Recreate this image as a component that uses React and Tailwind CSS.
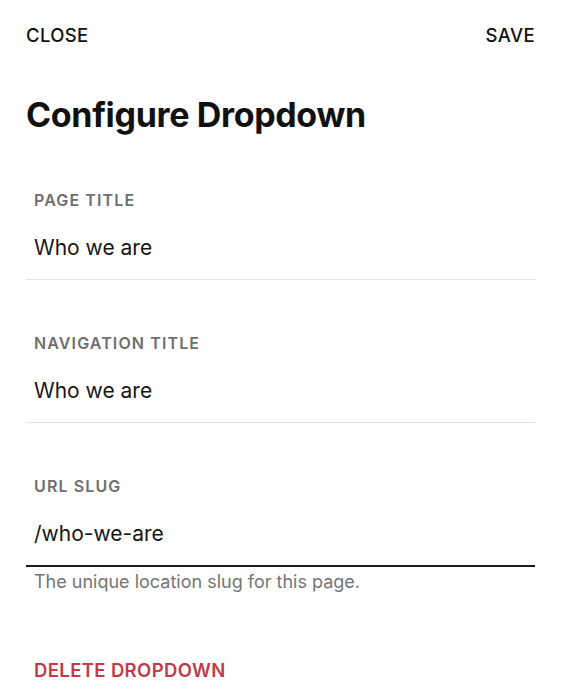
export default function App() {
  const font = { fontFamily: 'Inter, "Noto Sans", sans-serif' };
  return (
    <div className="min-h-[700px] w-full bg-white text-[#111]" style={font}>
      <div className="pl-[26px] pr-[28px]">
        <div className="flex items-center justify-between pt-[23px] text-[18.5px] font-medium leading-6 tracking-[0.02em]">
          <span>CLOSE</span>
          <span>SAVE</span>
        </div>
        <h1 className="mt-[48px] text-[34px] font-bold leading-[40px] tracking-[-0.01em]">Configure Dropdown</h1>

        <div className="mt-[55px]">
          <div className="border-b border-[#e4e4e4] px-2 pb-[17px]">
            <div className="text-[16px] font-semibold leading-5 tracking-[0.07em] text-[#6e6e6e]">PAGE TITLE</div>
            <div className="mt-[24px] text-[21px] leading-7 text-[#161616]">Who we are</div>
          </div>
          <div className="mt-[53px] border-b border-[#e4e4e4] px-2 pb-[17px]">
            <div className="text-[16px] font-semibold leading-5 tracking-[0.07em] text-[#6e6e6e]">NAVIGATION TITLE</div>
            <div className="mt-[24px] text-[21px] leading-7 text-[#161616]">Who we are</div>
          </div>
          <div className="mt-[53px]">
            <div className="border-b-2 border-[#1a1a1a] px-2 pb-[17px]">
              <div className="text-[16px] font-semibold leading-5 tracking-[0.07em] text-[#6e6e6e]">URL SLUG</div>
              <div className="mt-[24px] text-[21px] leading-7 text-[#161616]">/who-we-are</div>
            </div>
            <div className="mt-[3px] px-2 text-[18px] leading-6 text-[#757575]">The unique location slug for this page.</div>
          </div>
        </div>

        <div className="mt-[64px] px-2 text-[18.5px] font-semibold leading-6 tracking-[0.02em] text-[#c23a4a]">DELETE DROPDOWN</div>
      </div>
    </div>
  );
}
